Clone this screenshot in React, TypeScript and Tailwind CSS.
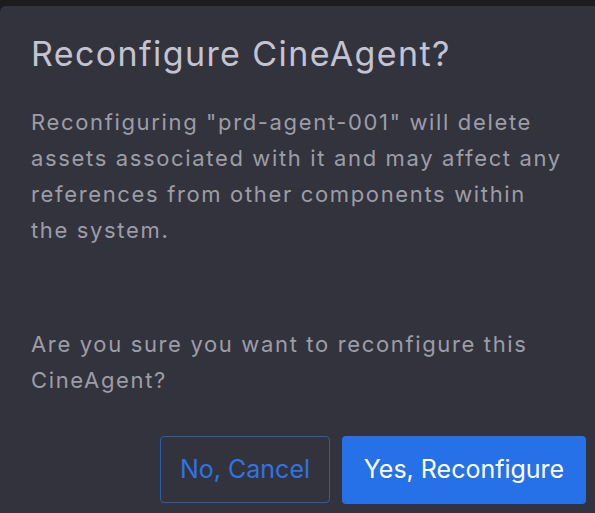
import React from 'react';

const font = { fontFamily: 'Inter, "Noto Sans", sans-serif' };

export default function App() {
  return (
    <div className="min-h-screen bg-[#1b1b20] pt-[6px]" style={font}>
      <div className="flex h-[507px] flex-col rounded-tl-[6px] bg-[#33333d] pl-[31px] pr-[9px] pt-[28px]">
        <h1 className="whitespace-nowrap text-[34px] leading-[1.2] font-normal tracking-[1.4px] text-[#c3c3d2]">
          Reconfigure CineAgent?
        </h1>

        <p className="mt-[29px] whitespace-nowrap text-[22px] leading-[36px] tracking-[1.65px] text-[#9d9da8]">
          Reconfiguring "prd-agent-001" will delete
          <br />
          assets associated with it and may affect any
          <br />
          references from other components within
          <br />
          the system.
        </p>

        <p className="mt-[78px] whitespace-nowrap text-[22px] leading-[36px] tracking-[1.65px] text-[#9d9da8]">
          Are you sure you want to reconfigure this
          <br />
          CineAgent?
        </p>

        <div className="mt-[38px] flex justify-end gap-3">
          <button className="h-[67px] w-[170px] rounded-[4px] border border-[#2a5cb3] text-[25px] text-[#2f74e2]">
            No, Cancel
          </button>
          <button className="h-[68px] w-[244px] rounded-[4px] bg-[#2671e8] text-[25px] text-white">
            Yes, Reconfigure
          </button>
        </div>
      </div>
    </div>
  );
}
